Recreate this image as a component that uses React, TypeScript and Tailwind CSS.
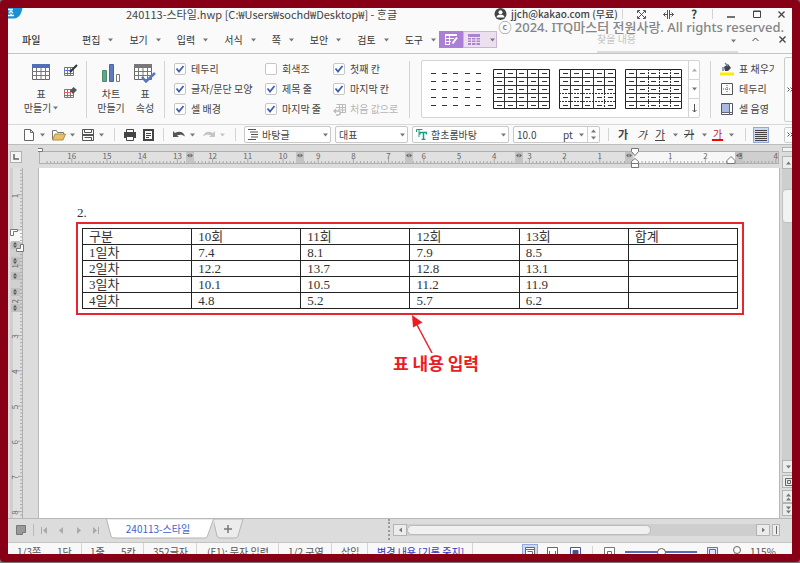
import React from 'react';

const MENUS = ['편집', '보기', '입력', '서식', '쪽', '보안', '검토', '도구'];

const TABLE_HEAD = ['구분', '10회', '11회', '12회', '13회', '합계'];
const TABLE_ROWS = [
  ['1일차', '7.4', '8.1', '7.9', '8.5', ''],
  ['2일차', '12.2', '13.7', '12.8', '13.1', ''],
  ['3일차', '10.1', '10.5', '11.2', '11.9', ''],
  ['4일차', '4.8', '5.2', '5.7', '6.2', ''],
];

const UNIT = 35.2;

function Caret({ className = '', color = '#777' }: { className?: string; color?: string }) {
  return (
    <svg width="5" height="4" viewBox="0 0 5 4" className={`shrink-0 ${className}`} aria-hidden="true">
      <path d="M0 0.5h5L2.5 3.5z" fill={color} />
    </svg>
  );
}

function Divider({ className = 'h-3' }: { className?: string }) {
  return <span className={`w-px shrink-0 bg-[#d4d4d4] ${className}`} />;
}

function TitleBar() {
  return (
    <header className="flex h-[18px] shrink-0 items-start text-[11px] leading-3 text-[#444]">
      <svg width="15" height="11" viewBox="0 0 15 11" className="shrink-0" aria-hidden="true">
        <path d="M0 0h14.500c-1 4-2 9.500-8 10.500H0z" fill="#1a8fd4" />
        <path d="M0 1.500h5M1 5l2-2 2 2M0 7.500h6M3 5.500v2" stroke="#fff" strokeWidth="1.300" fill="none" />
      </svg>
      <h1 className="ml-[103px] whitespace-nowrap font-normal">
        240113-스타일.hwp [C:₩Users₩sochd₩Desktop₩] - ᄒᆞᆫ글
      </h1>
      <div className="ml-auto flex h-3 shrink-0 items-center">
        <svg width="13" height="13" viewBox="0 0 13 13" className="mr-1" aria-hidden="true">
          <circle cx="6.500" cy="6" r="6" fill="#444" />
          <circle cx="6.500" cy="4.300" r="2" fill="#fff" />
          <path d="M2.500 9.500c0-4 8-4 8 0z" fill="#fff" />
        </svg>
        <span className="w-[106px] whitespace-nowrap text-[10px] font-medium">jjch@kakao.com (무료)</span>
        <Divider className="mx-[5px] h-2.5" />
        <button aria-label="전체 화면" className="flex w-[27px] justify-center">
          <svg width="9" height="9" viewBox="0 0 9 9" fill="none" stroke="#555">
            <path d="M0.500 3V0.500H3M6 0.500h2.500V3M8.500 6v2.500H6M3 8.500H0.500V6M1 1l7 7M8 1L1 8" />
          </svg>
        </button>
        <button aria-label="창 나누기" className="flex w-[26px] justify-center">
          <svg width="11" height="9" viewBox="0 0 11 9" fill="none" stroke="#555">
            <path d="M4.500 0v9M6.500 0v9M0.500 4.500H4M7 4.500h3.500M2.500 2.500l-2 2 2 2M8.500 2.500l2 2-2 2" />
          </svg>
        </button>
        <button className="w-[26px] text-[12px] font-bold">?</button>
        <Divider className="mx-[5px] h-2.5" />
        <button aria-label="최소화" className="flex w-[26px] justify-center">
          <svg width="8" height="8" stroke="#444" strokeWidth="1.500"><path d="M0 7h8" /></svg>
        </button>
        <button aria-label="최대화" className="flex w-[26px] justify-center">
          <svg width="8" height="8" fill="none" stroke="#444"><path d="M0.500 1h7v6.500h-7zM0 1.500h8" /></svg>
        </button>
        <button aria-label="닫기" className="flex w-[22px] justify-center">
          <svg width="7" height="7" stroke="#444" strokeWidth="1.300"><path d="M0.500 0.500l6 6M6.500 0.500l-6 6" /></svg>
        </button>
      </div>
    </header>
  );
}

function MenuBar() {
  return (
    <nav className="flex h-7 shrink-0 items-center border-b border-[#c4c4c4] text-[10px] text-[#333]">
      <button className="ml-[14px] w-[42px] text-left font-medium">파일</button>
      <Divider className="mr-[17px]" />
      <div className="flex gap-4">
        {MENUS.map((menu) => (
          <button key={menu} className="flex items-center gap-2 whitespace-nowrap">
            {menu}
            <Caret />
          </button>
        ))}
      </div>
      <div className="ml-[3px] flex h-[17px] shrink-0 rounded-[1px]">
        <button aria-label="표 디자인" className="flex w-6 items-center justify-center bg-[#ab7fd6]">
          <svg width="13" height="11" viewBox="0 0 13 11" fill="none" stroke="#fff">
            <path d="M0 1h12" strokeWidth="2" />
            <path d="M0 4.500h9M0 7.500h6M0.500 1v9.500M4.500 1v9.500M0 10.500h5" />
            <path d="M12 3.500L7.500 9.500" strokeWidth="2" />
          </svg>
        </button>
        <button aria-label="표 레이아웃" className="flex w-[34px] items-center gap-2.5 border border-[#c9b5d6] bg-[#ecdff0] pl-1">
          <svg width="12" height="11" viewBox="0 0 12 11">
            <path d="M0 0h12v11H0z" fill="#ab84d0" />
            <path d="M0 3.500h12M0 6h12M0 8.500h12M3.500 3v8M8 3v8" stroke="#ecdff0" />
          </svg>
          <Caret />
        </button>
      </div>
      <div className="ml-auto flex h-full items-center">
        <label className="flex h-[22px] w-[141px] items-center self-end border-b-2 border-[#dcdcdc]">
          <input
            aria-label="찾을 내용"
            placeholder="찾을 내용"
            className="h-full min-w-0 flex-1 bg-transparent pb-1.5 placeholder:text-[#c4c4c4]"
          />
          <Caret className="mr-0.5" />
        </label>
        <button aria-label="리본 접기" className="flex w-[34px] justify-center">
          <svg width="7" height="5" fill="none" stroke="#444"><path d="M0.500 4L3.500 1l3 3" /></svg>
        </button>
        <button aria-label="문서 닫기" className="flex w-[20px] justify-center">
          <svg width="7" height="7" stroke="#444" strokeWidth="1.300"><path d="M0.500 0.500l6 6M6.500 0.500l-6 6" /></svg>
        </button>
      </div>
    </nav>
  );
}

function TableGlyph({ head, check }: { head: string; check?: boolean }) {
  return (
    <svg width="22" height="20" viewBox="0 0 22 20" fill="none" aria-hidden="true">
      <path d="M0.500 1.500h17v15h-17z" fill="#fff" stroke="#666" />
      <path d="M0 1h18v4H0z" fill={head} />
      <path d="M0 8.500h18M0 12.500h18M4.500 5v12M9 5v12M13.500 5v12" stroke="#777" />
      {check && <path d="M8 14l4 4.500L21 10" stroke="#5a78c0" strokeWidth="2.500" />}
    </svg>
  );
}

function Check({ label, checked }: { label: string; checked?: boolean }) {
  return (
    <label className="flex h-4 items-center gap-[5px] whitespace-nowrap">
      <span className="grid">
        <input
          type="checkbox"
          defaultChecked={checked}
          className="peer col-start-1 row-start-1 size-3 appearance-none rounded-[2px] border border-[#c6c6c6] bg-white"
        />
        <svg
          viewBox="0 0 12 12"
          className="pointer-events-none col-start-1 row-start-1 hidden size-3 peer-checked:block"
          fill="none"
          stroke="#3f5fb5"
          strokeWidth="1.800"
        >
          <path d="M2.500 5.500l2.500 3 4.500-5.500" />
        </svg>
      </span>
      {label}
    </label>
  );
}

function StyleSample({ kind, label }: { kind: number; label: string }) {
  const cells = [0, 1, 2, 3, 4];
  const dashedRow = (i: number) => kind === 2 && i >= 3;
  const dashedCol = (i: number) => kind === 3 && i !== 1;
  return (
    <button aria-label={label} className="shrink-0">
      <svg width="57" height="40" viewBox="0 0 57 40" fill="none">
        {kind > 0 && <path d="M0.500 0.500h56v39h-56z" stroke="#222" />}
        {kind > 0 &&
          [1, 2, 3, 4].map((i) => (
            <g key={i} stroke="#333">
              <path d={`M0 ${i * 8 + 0.5}h57`} strokeDasharray={dashedRow(i) ? '2 1' : undefined} />
              <path d={`M${Math.round(i * 11.3) + 0.5} 0v${kind === 2 ? 24 : 40}`} strokeDasharray={dashedCol(i) ? '2 1' : undefined} />
              {kind === 2 && <path d={`M${Math.round(i * 11.3) + 0.5} 24v16`} strokeDasharray={i > 3 ? '2 1' : undefined} />}
            </g>
          ))}
        {cells.map((r) =>
          cells.map((c) => (
            <path key={`${r}-${c}`} d={`M${Math.round(c * 11.2) + 4} ${r * 8 + 4.5}h5`} stroke="#333" />
          )),
        )}
      </svg>
    </button>
  );
}

function Ribbon() {
  return (
    <section className="flex h-[71px] shrink-0 items-center overflow-hidden border-b border-[#d8d8d8] bg-[#fafafa] text-[10px] leading-[14px] text-[#444]">
      <button className="ml-[14px] flex w-[38px] flex-col items-center">
        <span className="pl-1"><TableGlyph head="#4f6fb8" /></span>
        <span className="mt-1">표</span>
        <span className="flex items-center gap-0.5 whitespace-nowrap">만들기<Caret /></span>
      </button>
      <div className="ml-1 flex flex-col gap-[9px] self-start pt-[10px]">
        <button aria-label="표 그리기">
          <svg width="14" height="13" viewBox="0 0 14 13" fill="none">
            <path d="M0.500 3.500h9v8h-9zM3.500 3.500v8M6.500 3.500v8M0 9.500h10" stroke="#777" />
            <path d="M0 6.500h7" stroke="#5577cc" />
            <path d="M6 8L13 1" stroke="#333" strokeWidth="2" />
          </svg>
        </button>
        <button aria-label="표 지우개">
          <svg width="14" height="13" viewBox="0 0 14 13" fill="none">
            <path d="M0.500 3.500h9v8h-9zM3.500 3.500v8M6.500 3.500v8M0 9.500h10" stroke="#777" />
            <path d="M0 6.500h7" stroke="#d66" />
            <path d="M9.500 1L13 4l-4 4-3-3z" fill="#555" />
          </svg>
        </button>
      </div>
      <Divider className="ml-2 h-[57px]" />
      <button className="ml-2 flex w-8 flex-col items-center">
        <svg width="20" height="20" viewBox="0 0 20 20">
          <path d="M1.500 7.500h4v11h-4z" fill="#62a487" stroke="#4d8b70" />
          <path d="M8.500 1.500h4v17h-4z" fill="#5c7cc0" stroke="#4766aa" />
          <path d="M15.500 11.500h3v7h-3z" fill="#fff" stroke="#777" />
        </svg>
        <span className="mt-1">차트</span>
        <span className="whitespace-nowrap">만들기</span>
      </button>
      <button className="ml-0.5 flex w-8 flex-col items-center">
        <TableGlyph head="#777" check />
        <span className="mt-1">표</span>
        <span>속성</span>
      </button>
      <Divider className="ml-[3px] h-[57px]" />
      <div className="ml-[9px] flex h-14 shrink-0 gap-[13px]">
        <div className="flex w-[78px] flex-col justify-between">
          <Check label="테두리" checked />
          <Check label="글자/문단 모양" checked />
          <Check label="셀 배경" checked />
        </div>
        <div className="flex w-[55px] flex-col justify-between">
          <Check label="회색조" />
          <Check label="제목 줄" checked />
          <Check label="마지막 줄" checked />
        </div>
        <div className="flex w-[66px] flex-col justify-between">
          <Check label="첫째 칸" checked />
          <Check label="마지막 칸" checked />
          <button disabled className="flex h-4 items-center gap-1 whitespace-nowrap text-[#b5b5b5]">
            <svg width="13" height="13" viewBox="0 0 13 13" fill="none" stroke="#bbb">
              <path d="M3.500 1.500h9v8H7M3 4.500h9M5 7h7M6.500 2v5M9.500 2v7" />
              <path d="M1 8h4c3 0 3 4 0 4H3M3 6L1 8l2 2" strokeWidth="1.300" />
            </svg>
            처음 값으로
          </button>
        </div>
      </div>
      <Divider className="ml-[10px] h-[57px]" />
      <div className="ml-[11px] flex h-[58px] shrink-0 rounded-[2px] border border-[#d4d4d4] bg-white">
        <div className="flex items-center gap-[9px] pl-[5px] pr-1.5">
          <StyleSample kind={0} label="표 스타일 없음" />
          <StyleSample kind={1} label="실선 스타일" />
          <StyleSample kind={2} label="가로 점선 스타일" />
          <StyleSample kind={3} label="세로 점선 스타일" />
        </div>
        <div className="flex w-[11px] flex-col divide-y divide-[#d4d4d4] border-l border-[#d4d4d4]">
          <button aria-label="위로" className="flex flex-1 items-center justify-center"><Caret className="rotate-180" color="#aaa" /></button>
          <button aria-label="아래로" className="flex flex-1 items-center justify-center"><Caret /></button>
          <button aria-label="더 보기" className="flex flex-1 items-center justify-center">
            <svg width="5" height="9" fill="none" stroke="#555"><path d="M2.500 0v8M0.500 6l2 2 2-2" /></svg>
          </button>
        </div>
      </div>
      <Divider className="ml-[10px] h-[57px]" />
      <div className="ml-[9px] flex h-14 w-[54px] shrink-0 flex-col justify-between overflow-hidden">
        <button className="flex h-4 items-center gap-[5px] whitespace-nowrap">
          <svg width="14" height="14" viewBox="0 0 14 14" className="shrink-0">
            <path d="M0 10.500h14v3H0z" fill="#f7ee00" />
            <path d="M4 5l4-3 3 4-3 3H5z" fill="#444" />
            <path d="M5 1l3 3M3 5v4" stroke="#6b86b8" fill="none" strokeWidth="1.500" />
          </svg>
          표 채우기
        </button>
        <button className="flex h-4 items-center gap-[5px] whitespace-nowrap">
          <svg width="14" height="12" viewBox="0 0 14 12" fill="none" stroke="#555" className="shrink-0">
            <path d="M1.500 0.500h11v11h-11z" />
            <path d="M7 2v8M3 6h8" strokeDasharray="1 1" />
          </svg>
          테두리
          <Caret className="ml-1" />
        </button>
        <button className="flex h-4 items-center gap-[5px] whitespace-nowrap">
          <svg width="14" height="12" viewBox="0 0 14 12" className="shrink-0">
            <path d="M1.500 0.500h11v11h-11z" fill="#fff" stroke="#556" />
            <path d="M2 1h7v8H2z" fill="#a9b9e2" />
            <path d="M9.500 0v12M1 9.500h12" stroke="#667" />
          </svg>
          셀 음영
        </button>
      </div>
      <button aria-label="리본 더 보기" className="-mr-1 ml-auto flex h-[65px] w-3 shrink-0 items-center rounded-[2px] border border-[#ccc] pl-0.5">
        <svg width="6" height="5" fill="none" stroke="#555"><path d="M0.500 0.500l2 2-2 2M3.500 0.500l2 2-2 2" /></svg>
      </button>
    </section>
  );
}

function Combo({ label, value, width, pad, icon }: { label: string; value: string; width: string; pad: string; icon?: React.ReactNode }) {
  return (
    <label className={`grid h-[17px] shrink-0 items-center ${width}`}>
      <select aria-label={label} className={`col-start-1 row-start-1 h-full w-full appearance-none rounded-[2px] border border-[#c8c8c8] bg-white text-[10px] leading-3 ${pad}`}>
        <option>{value}</option>
      </select>
      {icon && <span className="pointer-events-none col-start-1 row-start-1 ml-1 justify-self-start">{icon}</span>}
      <span className="pointer-events-none col-start-1 row-start-1 mr-[3px] justify-self-end"><Caret /></span>
    </label>
  );
}

function ToolBar() {
  return (
    <section className="flex h-5 shrink-0 items-center overflow-hidden border-b border-[#bdbdbd] bg-[#fafafa] text-[10px] text-[#444]">
      <button aria-label="새 문서" className="ml-[15px] flex w-[29px] shrink-0 items-center gap-1">
        <svg width="13" height="12" fill="#fff" stroke="#666"><path d="M1.500 0.500h6l3 3v8h-9zM7.500 0.500v3h3" /></svg>
        <Caret />
      </button>
      <button aria-label="불러오기" className="flex w-[30px] shrink-0 items-center gap-1">
        <svg width="14" height="12" viewBox="0 0 14 12">
          <path d="M0.500 10.500v-9h4l1 2h6v2" fill="#fff" stroke="#777" />
          <path d="M3 5h10.500l-2.500 6H0.500z" fill="#e7c06a" stroke="#b08e46" />
        </svg>
        <Caret />
      </button>
      <button aria-label="저장" className="flex w-8 shrink-0 items-center gap-[5px]">
        <svg width="12" height="12" fill="none" stroke="#555">
          <path d="M0.500 0.500h11v11H0.500z" />
          <path d="M2.500 1v2.500h7V1" />
          <path d="M0 6h12" strokeWidth="2" />
          <path d="M2.500 8.500h7v3" />
        </svg>
        <Caret />
      </button>
      <Divider className="h-[13px]" />
      <button aria-label="인쇄" className="ml-[9px] shrink-0">
        <svg width="12" height="12" viewBox="0 0 12 12">
          <path d="M2.500 0.500h7v3h-7z" fill="#fff" stroke="#444" />
          <path d="M0 3h12v6H0z" fill="#444" />
          <path d="M2.500 7.500h7v4h-7z" fill="#fff" stroke="#444" />
        </svg>
      </button>
      <button aria-label="미리 보기" className="ml-[7px] shrink-0">
        <svg width="11" height="12" fill="none" stroke="#444">
          <path d="M1 1h9v10H1z" strokeWidth="2" />
          <path d="M3 4.500h5M3 6.500h5M3 8.500h3" />
        </svg>
      </button>
      <Divider className="ml-[9px] h-[13px]" />
      <button aria-label="되돌리기" className="ml-[9px] flex w-[30px] shrink-0 items-center gap-[5px]">
        <svg width="12" height="8" viewBox="0 0 12 8"><path d="M0 6V0l2 2c4-2.500 9-1.500 10 3.500C9 3 6 3.500 4 4.500L6 6z" fill="#555" /></svg>
        <Caret />
      </button>
      <button aria-label="다시 실행" disabled className="flex w-8 shrink-0 items-center gap-[5px]">
        <svg width="12" height="8" viewBox="0 0 12 8"><path d="M12 6V0l-2 2C6 -0.500 1 0.500 0 5.500 3 3 6 3.500 8 4.500L6 6z" fill="#c4c4c4" /></svg>
        <Caret color="#c4c4c4" />
      </button>
      <Divider className="h-[13px]" />
      <div className="ml-2 flex shrink-0 gap-1">
        <Combo
          label="스타일"
          value="바탕글"
          width="w-[87px]"
          pad="pl-[17px]"
          icon={<svg width="10" height="11" fill="none" stroke="#555"><path d="M0 0.500h8M2 3h8M3 5.500h7M3 8h7M0 10.500h8" /></svg>}
        />
        <Combo label="글꼴 종류" value="대표" width="w-[73px]" pad="pl-[3px]" />
        <Combo
          label="글꼴"
          value="함초롬바탕"
          width="w-[97px]"
          pad="pl-[18px]"
          icon={
            <svg width="11" height="11" fill="none" stroke="#1c9c83">
              <path d="M0.500 3V0.500h6M3 1v7" />
              <path d="M4 5.500V3.500h6.500v2M7.500 3.500V10M5.500 10.500h4" strokeWidth="1.500" />
            </svg>
          }
        />
        <div className="flex h-[17px] w-[87px] items-center rounded-[2px] border border-[#c8c8c8] bg-white">
          <input aria-label="글자 크기" defaultValue="10.0" className="ml-[3px] w-[46px] text-[10px]" />
          <span className="w-[16px]">pt</span>
          <Caret />
          <span className="ml-[3px] flex h-full w-3 flex-col items-center justify-between border-l border-[#d0d0d0] py-0.5">
            <button aria-label="크게" className="flex"><Caret className="rotate-180" /></button>
            <button aria-label="작게" className="flex"><Caret /></button>
          </span>
        </div>
      </div>
      <Divider className="ml-2 h-[13px]" />
      <button aria-label="진하게" className="ml-[9px] w-[19px] shrink-0 text-left text-[11px] font-bold">가</button>
      <button aria-label="기울임" className="w-[18px] shrink-0 text-left text-[11px] italic">가</button>
      <button aria-label="밑줄" className="flex w-[29px] shrink-0 items-center gap-2">
        <span className="border-b border-[#444] text-[11px] leading-[11px]">가</span>
        <Caret />
      </button>
      <button aria-label="취소선" className="flex w-[28px] shrink-0 items-center gap-2">
        <span className="text-[11px] line-through">가</span>
        <Caret />
      </button>
      <button aria-label="글자 색" className="flex w-[33px] shrink-0 items-center gap-1.5">
        <span className="border-b-2 border-[#f00] px-px text-[10px] leading-[11px] text-[#b22]">가</span>
        <Caret />
      </button>
      <Divider className="h-[13px]" />
      <button aria-label="양쪽 정렬" className="ml-[7px] flex h-4 w-4 shrink-0 items-center justify-center border border-[#8fa8e0] bg-[#cfdaf5]">
        <svg width="12" height="12" stroke="#444"><path d="M0 1.500h12M0 3.500h12M0 5.500h12M0 7.500h12M0 9.500h12M0 11.500h12" /></svg>
      </button>
      <button aria-label="도구 더 보기" className="-mr-1 ml-auto flex h-4 w-3 shrink-0 items-center rounded-[2px] border border-[#ccc] pl-0.5">
        <svg width="6" height="5" fill="none" stroke="#555"><path d="M0.500 0.500l2 2-2 2M3.500 0.500l2 2-2 2" /></svg>
      </button>
    </section>
  );
}

function HorizontalRuler() {
  const zero = 597;
  const ticks = Array.from({ length: 208 }, (_, i) => i - 167);
  const numbers = Array.from({ length: 21 }, (_, i) => i - 16).filter((n) => n !== 0);
  return (
    <svg width="742" height="23" className="shrink-0" fill="none" aria-hidden="true">
      <path d="M1 6h740v12H1z" fill="#e0e0e0" />
      <path d="M597 6h102v12H597z" fill="#f7f7f7" />
      <path d="M699 6h42v12h-42z" fill="#cfcfcf" />
      <path d="M1 6.500h740M1.500 7v11M1 18.500h740M740.500 6v12" stroke="#b0b0b0" />
      {ticks.map((i) => (
        <path key={i} d={`M${zero + (i * UNIT) / 10} ${i % 10 === 0 ? 14 : 16}V18`} stroke="#999" strokeWidth="0.800" />
      ))}
      {[152, 262, 371, 481, 591, 701].map((x) => (
        <g key={x}>
          <path d={`M${x - 4} 7h8v11h-8z`} fill="#c4c4c4" />
          <path d={`M${x - 3} 10.500l2.500-2v4zM${x + 3} 10.500l-2.500-2v4z`} fill="#666" />
        </g>
      ))}
      {numbers.map((n) => (
        <text key={n} x={zero + n * UNIT} y="14" textAnchor="middle" fontSize="8" fill="#666">
          {Math.abs(n)}
        </text>
      ))}
      <path d="M-1.500 3.500h6v3h-6zM593.500 3.500h7v3l-3.500 4-3.500-4zM597 13.500l3.500 3v2h-7v-2zM593.500 18.500h7v4h-7z" fill="#fff" stroke="#777" />
      <path d="M693 11.500l4 4v3h-8v-3z" fill="#fff" stroke="#777" />
    </svg>
  );
}

function VerticalRuler() {
  const zero = 62;
  const ticks = Array.from({ length: 260 }, (_, i) => i - 17);
  const numbers = Array.from({ length: 24 }, (_, i) => i + 1);
  return (
    <div className="min-h-0 w-[30px] shrink-0 overflow-hidden bg-[#dcdcdc]">
      <svg width="30" height="1000" fill="none" aria-hidden="true">
        <path d="M2 0h12v1000H2z" fill="#e0e0e0" />
        <path d="M2 0h3v1000H2z" fill="#cfcfcf" />
        <path d="M2 62h12v12H2z" fill="#f7f7f7" />
        <path d="M2 74h12v70H2z" fill="#d0d0d0" />
        <path d="M14.500 0v1000" stroke="#b0b0b0" />
        {ticks.map((i) => (
          <path key={i} d={`M${i % 10 === 0 ? 10 : 12} ${zero + (i * UNIT) / 10}H14`} stroke="#999" strokeWidth="0.800" />
        ))}
        {[77, 93, 108, 124, 140].map((y) => (
          <g key={y}>
            <path d={`M3 ${y - 4}h9v8H3z`} fill="#c0c0c0" />
            <path d={`M7 ${y - 3}l2 2.500H5zM7 ${y + 3}l2-2.500H5z`} fill="#555" />
          </g>
        ))}
        <text transform="translate(10 28) rotate(-90)" textAnchor="middle" fontSize="8" fill="#666">1</text>
        {numbers.map((n) => (
          <text key={n} transform={`translate(10 ${zero + n * UNIT + 1}) rotate(-90)`} textAnchor="middle" fontSize="8" fill="#666">
            {n}
          </text>
        ))}
        <path d="M2.500 61.500h7v2h-4v4h-3zM15.500 76.500h-3v4h-4v3h7z" fill="#fff" stroke="#777" />
      </svg>
    </div>
  );
}

function Page() {
  return (
    <main className="min-w-0 flex-1 overflow-hidden border-x border-[#b8b8b8] bg-white pl-[37px] pr-[35px] pt-[35px] font-['Liberation_Serif','Noto_Sans_CJK_KR',serif] text-[13px] text-[#333]">
      <p className="pl-px leading-[19px]">2.</p>
      <div className="border-2 border-[#e8242c] p-1">
        <table className="w-full table-fixed border-collapse text-left leading-[15px]">
          <thead>
            <tr>
              {TABLE_HEAD.map((h) => (
                <th key={h} className="h-4 border border-[#222] p-0 pl-1.5 font-normal">{h}</th>
              ))}
            </tr>
          </thead>
          <tbody>
            {TABLE_ROWS.map((row) => (
              <tr key={row[0]}>
                {row.map((cell, i) => (
                  <td key={i} className="h-4 border border-[#222] p-0 pl-1.5">{cell}</td>
                ))}
              </tr>
            ))}
          </tbody>
        </table>
      </div>
      <div className="w-[720px] pl-[333px]">
        <svg width="26" height="38" viewBox="0 0 26 38" fill="none">
          <path d="M23 38L7 8" stroke="#e8242c" strokeWidth="1.500" />
          <path d="M3 0l10.500 7.500L4 12.500z" fill="#ed1c24" />
        </svg>
      </div>
      <p className="w-[720px] text-center font-['Noto_Sans_CJK_KR',sans-serif] text-[17px] font-bold leading-5 text-[#ed1c24]">
        표 내용 입력
      </p>
    </main>
  );
}

function VerticalScrollbar() {
  const btn = 'flex h-[13px] w-[13px] shrink-0 items-center justify-center border border-[#b4b4b4] bg-[#ececec]';
  return (
    <div className="flex w-3 shrink-0 flex-col overflow-hidden bg-[#dcdcdc] pl-0.5 pt-0.5">
      <button aria-label="창 가르기" className="h-[5px] w-[13px] shrink-0 border border-[#b4b4b4] bg-[#f4f4f4]" />
      <button aria-label="위로 스크롤" className={`mt-1 ${btn}`}><Caret className="rotate-180" /></button>
      <div className="flex-1 bg-[#cecece] pt-5">
        <div className="h-[34px] w-[14px] rounded-[4px] border border-[#c0c0c0] bg-[#f2f2f2]" />
      </div>
      <button aria-label="아래로 스크롤" className={btn}><Caret /></button>
      <button aria-label="개체 선택" className={`mt-0.5 ${btn}`}>
        <svg width="8" height="8" fill="none" stroke="#666"><path d="M0.500 0.500h7v7h-7zM2.500 2.500h3v3h-3z" /></svg>
      </button>
      <button aria-label="이전 쪽" className={`mt-0.5 flex-col ${btn}`}><Caret className="rotate-180" /><Caret className="rotate-180" /></button>
      <button aria-label="다음 쪽" className={`mb-0.5 flex-col ${btn}`}><Caret /><Caret /></button>
    </div>
  );
}

function NavArrow({ label, d }: { label: string; d: string }) {
  return (
    <button aria-label={label} className="flex w-[17px] shrink-0 justify-center">
      <svg width="7" height="7" fill="#aaa"><path d={d} /></svg>
    </button>
  );
}

function TabBar() {
  return (
    <section className="flex h-6 shrink-0 items-start border-t border-[#b8b8b8] bg-[#dcdcdc] text-[10px]">
      <div className="flex h-[22px] shrink-0 items-center">
        <button aria-label="문서 목록" className="ml-2">
          <svg width="10" height="11" fill="#999" stroke="#777"><path d="M0.500 0.500h9v7l-3 0v2h-6z" /></svg>
        </button>
        <span className="ml-[7px] mr-[2px] h-3 w-px bg-[#bbb]" />
        <NavArrow label="처음 탭" d="M0 0h1v7H0zM6 0v7L2 3.500z" />
        <NavArrow label="이전 탭" d="M5 0v7L1 3.500z" />
        <NavArrow label="다음 탭" d="M2 0v7l4-3.500z" />
        <NavArrow label="마지막 탭" d="M6 0h1v7H6zM1 0v7l4-3.500z" />
      </div>
      <button className="ml-[2px] grid h-5 w-[108px] shrink-0 items-center justify-items-center text-[#3f62cf]">
        <svg width="108" height="20" className="col-start-1 row-start-1" fill="#fff">
          <path d="M0.500 0h107l-6 17q-1 2-3 2H8q-2 0-3-2z" stroke="#b4b4b4" />
          <path d="M1 0h106" stroke="#fff" />
        </svg>
        <span className="z-10 col-start-1 row-start-1 pr-1 leading-4">240113-스타일</span>
      </button>
      <button aria-label="새 탭" className="shrink-0">
        <svg width="30" height="20" fill="#ececec">
          <path d="M-1 0h30l-5 17q-1 2-3 2H6q-2 0-3-2z" stroke="#b4b4b4" />
          <path d="M10 10h8M14 6v8" stroke="#777" strokeWidth="1.500" />
        </svg>
      </button>
      <div className="ml-[144px] h-[21px] border-l-2 border-dotted border-[#999]" />
      <div className="ml-[3px] mt-[5px] flex min-w-0 flex-1 pr-3">
        <button aria-label="왼쪽으로 스크롤" className="flex h-3 w-[14px] shrink-0 items-center justify-center border border-[#b4b4b4] bg-[#ececec]">
          <Caret className="rotate-90" />
        </button>
        <div className="h-3 min-w-0 flex-1 bg-[#cecece] py-px">
          <div className="h-2.5 w-[70%] rounded-full border border-[#bcbcbc] bg-[#f0f0f0]" />
        </div>
        <button aria-label="오른쪽으로 스크롤" className="flex h-3 w-[14px] shrink-0 items-center justify-center border border-[#b4b4b4] bg-[#ececec]">
          <Caret className="-rotate-90" />
        </button>
        <span className="ml-0.5 flex h-3 w-2 shrink-0 items-center justify-center border border-[#b4b4b4] bg-[#ececec]">
          <span className="h-2 w-px bg-[#666]" />
        </span>
      </div>
    </section>
  );
}

function StatusBar() {
  return (
    <footer className="h-3 shrink-0 overflow-hidden border-t border-[#c4c4c4] bg-[#f8f8f8] text-[10px] leading-4 text-[#555]">
      <div className="flex h-[18px] items-center whitespace-nowrap">
        <span className="ml-[9px] w-10">1/3쪽</span>
        <span className="w-[24px]">1단</span>
        <Divider className="h-full" />
        <span className="ml-2 w-[31px]">1줄</span>
        <span className="w-[22px]">5칸</span>
        <Divider className="h-full" />
        <span className="ml-[9px] w-[43px]">352글자</span>
        <Divider className="h-full" />
        <span className="ml-[10px] w-[71px]">(F1): 문자 입력</span>
        <Divider className="h-full" />
        <span className="ml-[9px] w-[43px]">1/2 구역</span>
        <Divider className="h-full" />
        <span className="ml-[9px] w-[26px]">삽입</span>
        <Divider className="h-full" />
        <span className="ml-[9px] w-[95px] text-[#2f35c4]">변경 내용 [기록 중지]</span>
        <Divider className="h-full" />
        <div className="ml-auto mr-[17px] flex items-center">
          <button aria-label="쪽 윤곽" className="flex h-4 w-4 items-center justify-center border border-[#8fa8e0] bg-[#cfdaf5]">
            <svg width="10" height="11" fill="#fff" stroke="#666"><path d="M0.500 0.500h9v10h-9zM0 2.500h10M2.500 4.500h5v6" /></svg>
          </button>
          <button aria-label="폭 맞춤" className="ml-[9px]">
            <svg width="11" height="11" fill="#fff" stroke="#666"><path d="M0.500 0.500h10v10H0.500zM2.500 4v4M8.500 4v4" /></svg>
          </button>
          <button aria-label="쪽 맞춤" className="ml-3">
            <svg width="11" height="11" fill="#fff" stroke="#3d57a5"><path d="M0.500 0.500h10v10H0.500z" /><path d="M3 3.500h5v5H3z" fill="#556" /></svg>
          </button>
          <Divider className="ml-[11px] h-3" />
          <button aria-label="축소" className="ml-[11px]">
            <svg width="11" height="11" fill="#fff" stroke="#777"><path d="M0.500 0.500h10v10H0.500z" /><path d="M3.500 4.500h4v6h-4z" stroke="#4a6cc8" /></svg>
          </button>
          <input
            type="range"
            aria-label="확대 비율"
            defaultValue={51}
            className="ml-2.5 h-2.5 w-[72px] appearance-none bg-[linear-gradient(#4f6fc0,#4f6fc0)] bg-[length:100%_2px] bg-center bg-no-repeat [&::-webkit-slider-thumb]:size-[9px] [&::-webkit-slider-thumb]:appearance-none [&::-webkit-slider-thumb]:rounded-full [&::-webkit-slider-thumb]:border [&::-webkit-slider-thumb]:border-[#666] [&::-webkit-slider-thumb]:bg-white"
          />
          <button aria-label="확대" className="ml-2.5">
            <svg width="11" height="11" fill="#dde6fa" stroke="#777"><path d="M0.500 0.500h10v10H0.500z" /><path d="M2.500 2.500h6v8h-6z" stroke="#4a6cc8" /></svg>
          </button>
          <svg width="10" height="12" fill="none" stroke="#666" className="ml-3.5"><path d="M5 0.500a3.500 3.500 0 1 1 0 7a3.500 3.500 0 1 1 0-7M3 7.500L1 11" /></svg>
          <span className="ml-[8px] w-[25px]">115%</span>
        </div>
      </div>
    </footer>
  );
}

export default function App() {
  return (
    <div className="h-screen bg-[#777] pb-px font-['Noto_Sans_CJK_KR',sans-serif]">
      <div className="h-full rounded-[4px] bg-[#870016] p-2">
        <div className="relative flex h-full flex-col overflow-hidden bg-[#fafafa]">
          <TitleBar />
          <MenuBar />
          <p className="pointer-events-none absolute right-2 top-2.5 whitespace-nowrap font-['Noto_Sans','Noto_Sans_CJK_KR',sans-serif] text-[13px] font-medium leading-[18px] text-[#858585]">
            ⓒ 2024. ITQ마스터 전원사랑. All rights reserved.
          </p>
          <Ribbon />
          <ToolBar />
          <div className="flex min-h-0 flex-1">
            <div className="flex min-w-0 flex-1 flex-col overflow-hidden bg-[#dcdcdc]">
              <div className="flex h-[23px] shrink-0">
                <div className="w-[30px] shrink-0 pl-0.5 pt-1.5">
                  <button aria-label="탭 종류" className="flex size-3 items-center justify-center border border-[#b0b0b0] bg-[#f4f4f4]">
                    <svg width="6" height="6" fill="none" stroke="#666" strokeWidth="1.500"><path d="M1 0v5h5" /></svg>
                  </button>
                </div>
                <HorizontalRuler />
              </div>
              <div className="flex min-h-0 flex-1">
                <VerticalRuler />
                <Page />
              </div>
            </div>
            <VerticalScrollbar />
          </div>
          <TabBar />
          <StatusBar />
        </div>
      </div>
    </div>
  );
}
